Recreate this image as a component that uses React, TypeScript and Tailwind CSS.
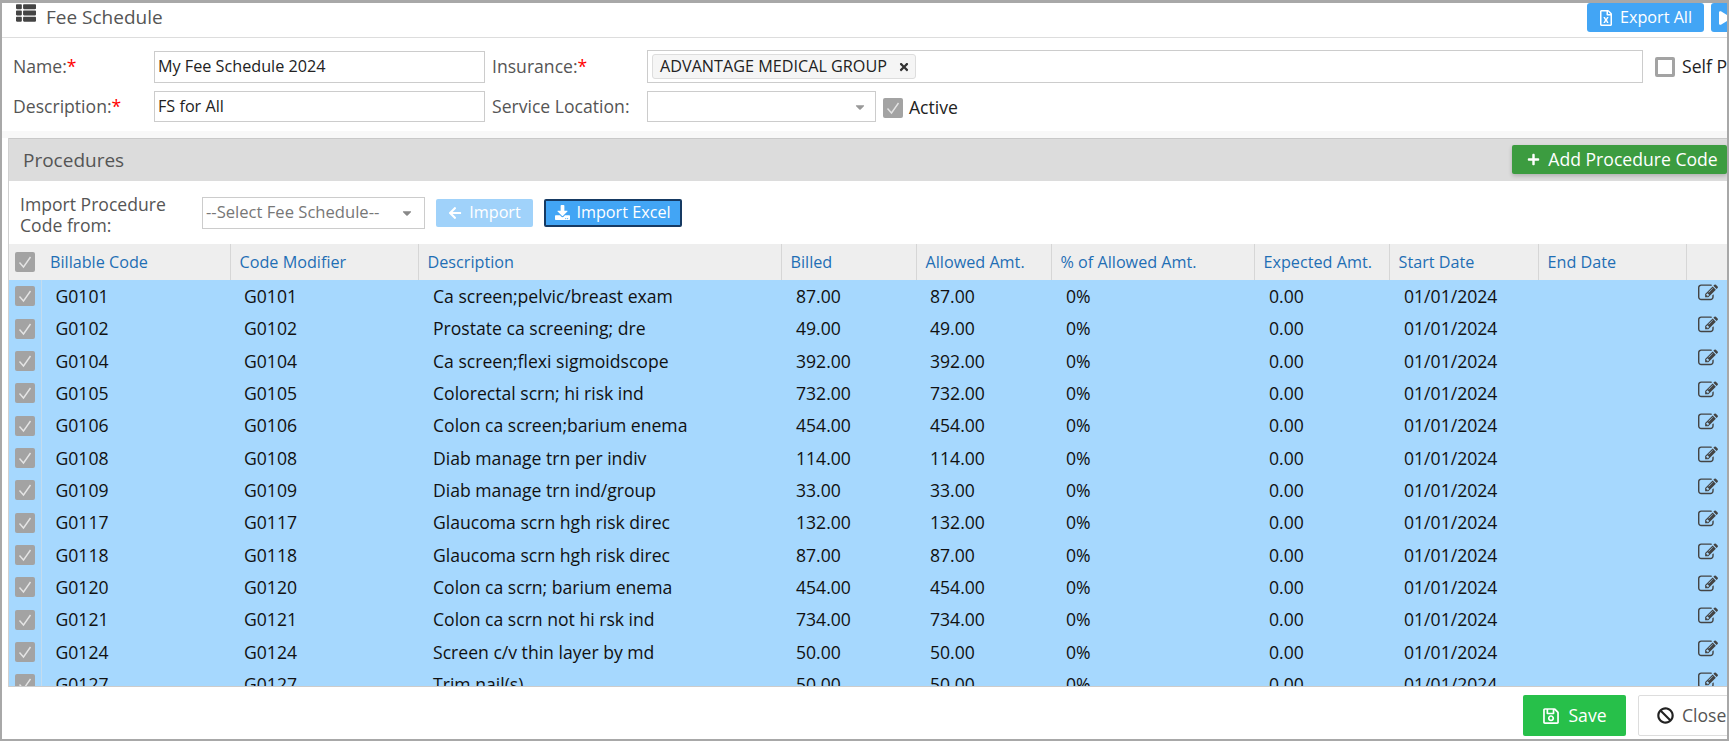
import React from 'react';
import {
  FaThList,
  FaRegFileExcel,
  FaPlay,
  FaPlus,
  FaArrowLeft,
  FaDownload,
  FaRegSave,
  FaBan,
  FaTimes,
  FaCaretDown,
} from 'react-icons/fa';

const rows = [
  ['G0101', 'Ca screen;pelvic/breast exam', '87.00'],
  ['G0102', 'Prostate ca screening; dre', '49.00'],
  ['G0104', 'Ca screen;flexi sigmoidscope', '392.00'],
  ['G0105', 'Colorectal scrn; hi risk ind', '732.00'],
  ['G0106', 'Colon ca screen;barium enema', '454.00'],
  ['G0108', 'Diab manage trn per indiv', '114.00'],
  ['G0109', 'Diab manage trn ind/group', '33.00'],
  ['G0117', 'Glaucoma scrn hgh risk direc', '132.00'],
  ['G0118', 'Glaucoma scrn hgh risk direc', '87.00'],
  ['G0120', 'Colon ca scrn; barium enema', '454.00'],
  ['G0121', 'Colon ca scrn not hi rsk ind', '734.00'],
  ['G0124', 'Screen c/v thin layer by md', '50.00'],
  ['G0127', 'Trim nail(s)', '50.00'],
];

const columns = [
  'Billable Code',
  'Code Modifier',
  'Description',
  'Billed',
  'Allowed Amt.',
  '% of Allowed Amt.',
  'Expected Amt.',
  'Start Date',
  'End Date',
];

const CheckedBox = () => (
  <span className="flex h-5 w-5 shrink-0 items-center justify-center rounded-[2px] bg-[#a3a3a3]">
    <svg viewBox="0 0 20 20" className="h-5 w-5" fill="none" stroke="#e4e4e4" strokeWidth="1.4">
      <path d="M4.5 10.5 L8.5 15 L15.5 5" />
    </svg>
  </span>
);

const EditIcon = () => (
  <svg viewBox="0 0 1792 1792" className="h-[20px] w-[20px] fill-[#444]">
    <path d="M888 1184l116-116-152-152-116 116v56h96v96h56zm440-720q-16-16-33 1l-350 350q-17 17-1 33t33-1l350-350q17-17 1-33zm80 594v190q0 119-84.5 203.5t-203.5 84.5h-832q-119 0-203.5-84.5t-84.5-203.5v-832q0-119 84.5-203.5t203.5-84.5h832q63 0 117 25 15 7 18 23 3 17-9 29l-49 49q-14 14-32 8-23-6-45-6h-832q-66 0-113 47t-47 113v832q0 66 47 113t113 47h832q66 0 113-47t47-113v-126q0-13 9-22l64-64q15-15 35-7t20 29zm-96-738l288 288-672 672h-288v-288zm444 132l-92 92-288-288 92-92q28-28 68-28t68 28l152 152q28 28 28 68t-28 68z" />
  </svg>
);

const Required = () => <span className="text-[#f00]">*</span>;

const App: React.FC = () => {
  return (
    <div className="h-[741px] w-[1729px] overflow-hidden border-x-2 border-t-[3px] border-b-2 border-[#a8a8a8] bg-white font-['Open_Sans',sans-serif] text-[17.6px] text-[#222]">
      <div className="flex h-[35px] w-[1725px] items-start border-b border-[#ddd]">
        <FaThList className="ml-[14px] h-[20px] w-[20px] text-[#444]" />
        <span className="ml-[10px] mt-[1px] text-[19px] leading-[26px] text-[#555]">Fee Schedule</span>
        <div className="ml-auto flex shrink-0 translate-x-[24px] gap-[7px]">
          <button className="flex h-[29px] w-[117px] items-center justify-center gap-[7px] rounded-[3px] bg-[#42a5f5] text-[16.2px] text-white">
            <FaRegFileExcel className="h-[16px] w-[14px]" />
            Export All
          </button>
          <button className="flex h-[29px] w-[40px] items-center rounded-[3px] bg-[#42a5f5] pl-[8px] text-white">
            <FaPlay className="h-[14px] w-[12px]" />
          </button>
        </div>
      </div>

      <div className="h-[93px] pt-[12px]">
        <div className="flex items-center">
          <label className="w-[152px] shrink-0 pl-[11px] text-[#555]">
            Name:<Required />
          </label>
          <div className="flex h-[32px] w-[331px] shrink-0 items-center border border-[#ccc] px-[3px] text-[16.2px]">
            My Fee Schedule 2024
          </div>
          <label className="ml-[7px] w-[155px] shrink-0 text-[#555]">
            Insurance:<Required />
          </label>
          <div className="flex h-[33px] w-[996px] shrink-0 items-center border border-[#ccc] px-[4px]">
            <span className="flex h-[25px] w-[264px] items-center justify-between rounded-[3px] border border-[#ddd] bg-[#f5f5f5] pl-[7px] pr-[5px] text-[16.2px]">
              ADVANTAGE MEDICAL GROUP
              <FaTimes className="h-[12px] w-[12px] text-[#333]" />
            </span>
          </div>
          <span className="ml-[12px] h-5 w-5 shrink-0 rounded-[2px] border-[3px] border-[#a3a3a3]" />
          <span className="ml-[7px] whitespace-nowrap">Self Pay</span>
        </div>
        <div className="mt-[8px] flex items-center">
          <label className="w-[152px] shrink-0 pl-[11px] text-[#555]">
            Description:<Required />
          </label>
          <div className="flex h-[31px] w-[331px] shrink-0 items-center border border-[#ccc] px-[3px] text-[16.2px]">
            FS for All
          </div>
          <label className="ml-[7px] w-[155px] shrink-0 text-[#555]">Service Location:</label>
          <div className="flex h-[31px] w-[229px] shrink-0 items-center justify-end border border-[#ccc] pr-[8px]">
            <FaCaretDown className="h-[14px] w-[14px] text-[#999]" />
          </div>
          <span className="ml-[7px] mt-[2px]">
            <CheckedBox />
          </span>
          <span className="ml-[6px] mt-[2px]">Active</span>
        </div>
      </div>

      <div className="h-[7px] bg-[#f8f8f8]" />

      <div className="ml-[6px] w-[1719px] border-l border-[#d0d0d0]">
        <div className="flex h-[43px] items-center justify-between border-t border-[#c8c8c8] bg-[#dcdcdc]">
          <span className="pl-[14px] text-[19px] text-[#555]">Procedures</span>
          <button className="mt-[-1px] flex h-[29px] w-[215px] items-center justify-center gap-[8px] rounded-[2px] bg-[#3c9c40] pl-[6px] text-[17.6px] text-white shadow-[0_2px_4px_rgba(0,0,0,0.2)]">
            <FaPlus className="h-[13px] w-[13px]" />
            Add Procedure Code
          </button>
        </div>

        <div className="flex h-[63px] items-center">
          <div className="w-[193px] shrink-0 pl-[11px] pt-[4px] leading-[21px] text-[#555]">
            Import Procedure
            <br />
            Code from:
          </div>
          <div className="flex h-[32px] w-[223px] shrink-0 items-center justify-between border border-[#ccc] pl-[3px] pr-[10px] text-[16.6px] text-[#777]">
            --Select Fee Schedule--
            <FaCaretDown className="h-[14px] w-[14px] text-[#888]" />
          </div>
          <button className="ml-[11px] flex h-[28px] w-[97px] items-center justify-center gap-[7px] rounded-[2px] bg-[#a0d2fa] text-[16.2px] text-white">
            <FaArrowLeft className="h-[14px] w-[14px]" />
            Import
          </button>
          <button className="ml-[11px] flex h-[28px] w-[138px] items-center justify-center gap-[6px] rounded-[2px] border-2 border-[#163a63] bg-[#42a5f5] text-[16.2px] text-white">
            <FaDownload className="h-[15px] w-[15px]" />
            Import Excel
          </button>
        </div>

        <div className="h-[443px] overflow-hidden border-b border-[#ccc]">
          <table className="w-[1719px] table-fixed border-collapse">
            <colgroup>
              <col className="w-[32px]" />
              <col className="w-[189px]" />
              <col className="w-[188px]" />
              <col className="w-[363px]" />
              <col className="w-[135px]" />
              <col className="w-[135px]" />
              <col className="w-[203px]" />
              <col className="w-[135px]" />
              <col className="w-[149px]" />
              <col className="w-[148px]" />
              <col className="w-[42px]" />
            </colgroup>
            <thead>
              <tr className="h-[36px] bg-[#eeeeee]">
                <th className="pl-[6px]">
                  <CheckedBox />
                </th>
                {columns.map((c) => (
                  <th
                    key={c}
                    className="border-r border-[#d6d6d6] pl-[9px] text-left text-[16.2px] font-normal text-[#1f6fb5]"
                  >
                    {c}
                  </th>
                ))}
                <th />
              </tr>
            </thead>
            <tbody>
              {rows.map(([code, desc, amt]) => (
                <tr
                  key={code}
                  className="h-[32px] bg-[#a6d8fe] text-[17.6px] text-[#111] [&:nth-child(3n+2)]:h-[33px]"
                >
                  <td className="border-r border-[#c4dcee] pl-[6px]">
                    <CheckedBox />
                  </td>
                  <td className="pl-[14px]">{code}</td>
                  <td className="pl-[14px]">{code}</td>
                  <td className="pl-[15px]">{desc}</td>
                  <td className="pl-[15px]">{amt}</td>
                  <td className="pl-[14px]">{amt}</td>
                  <td className="pl-[15px]">0%</td>
                  <td className="pl-[15px]">0.00</td>
                  <td className="pl-[15px]">01/01/2024</td>
                  <td />
                  <td className="pl-[12px] pt-[3px] align-top">
                    <EditIcon />
                  </td>
                </tr>
              ))}
            </tbody>
          </table>
        </div>
      </div>

      <div className="flex pl-[1521px] pt-[8px]">
        <button className="flex h-[41px] w-[103px] shrink-0 items-center justify-center gap-[8px] rounded-[2px] bg-[#27c04a] text-[17.6px] text-white">
          <FaRegSave className="h-[18px] w-[18px]" />
          Save
        </button>
        <button className="ml-[12px] flex h-[41px] w-[110px] shrink-0 items-center gap-[8px] rounded-[2px] border border-[#ddd] pl-[18px] text-[17.6px] text-[#555]">
          <FaBan className="h-[17px] w-[17px] text-[#222]" />
          Close
        </button>
      </div>
    </div>
  );
};

export default App;
